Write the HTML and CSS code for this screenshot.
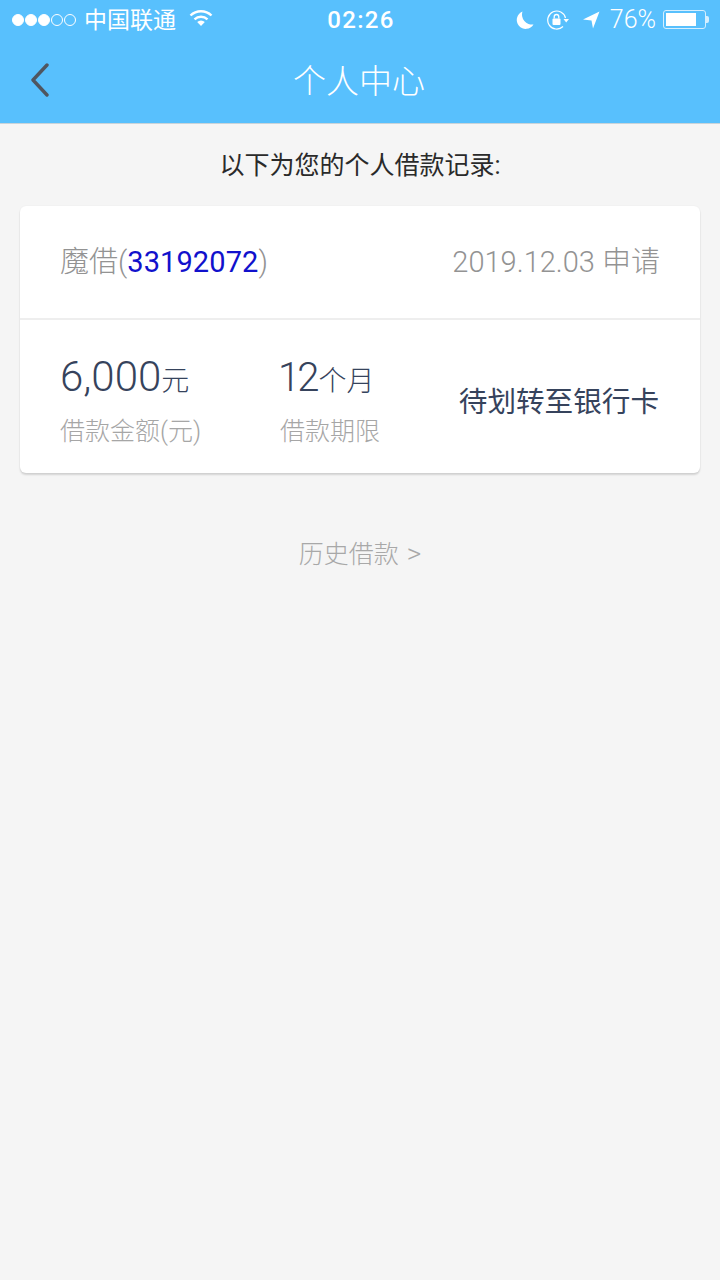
FILE: index.html
```html
<!DOCTYPE html>
<html lang="zh-CN">
<head>
    <meta charset="UTF-8">
    <meta name="viewport" content="width=device-width, initial-scale=1.0">
    <title>个人中心</title>
    <link rel="stylesheet" href="styles.css">
</head>
<body>
    <header class="top">
        <div class="status-bar">
            <div class="status-left">
                <span class="signal">
                    <i class="dot on"></i><i class="dot on"></i><i class="dot on"></i><i class="dot"></i><i class="dot"></i>
                </span>
                <span class="carrier">中国联通</span>
                <svg class="wifi" width="24" height="18" viewBox="0 0 24 18">
                    <path d="M1.5 6.5 A15 15 0 0 1 22.5 6.5" fill="none" stroke="#fff" stroke-width="2.4"/>
                    <path d="M5.5 10.3 A9.5 9.5 0 0 1 18.5 10.3" fill="none" stroke="#fff" stroke-width="2.4"/>
                    <path d="M8.2 13 L12 17 L15.8 13 A5.5 5.5 0 0 0 8.2 13 Z" fill="#fff"/>
                </svg>
            </div>
            <div class="status-time">02:26</div>
            <div class="status-right">
                <svg class="moon" width="20" height="20" viewBox="0 0 20 20">
                    <path d="M7.5 1.5 A9 9 0 1 0 18.5 14.5 A10 10 0 0 1 7.5 1.5 Z" fill="#fff"/>
                </svg>
                <svg class="lock" width="24" height="20" viewBox="0 0 24 20">
                    <path d="M19.5 8 A9 9 0 1 0 17 16.5" fill="none" stroke="#fff" stroke-width="1.2"/>
                    <path d="M17.5 9 L23 9 L20.2 12.5 Z" fill="#fff"/>
                    <rect x="6.5" y="8.5" width="8" height="6.5" rx="1" fill="#fff"/>
                    <path d="M8.2 8.5 V6.8 A2.3 2.3 0 0 1 12.8 6.8 V8.5" fill="none" stroke="#fff" stroke-width="1.3"/>
                </svg>
                <svg class="arrow" width="18" height="20" viewBox="0 0 18 20">
                    <path d="M1 9.5 L17.5 1.5 L11 18.5 L9.5 10.5 Z" fill="#fff"/>
                </svg>
                <span class="battery-text">76%</span>
                <span class="battery"><span class="battery-fill"></span></span>
            </div>
        </div>
        <div class="nav-bar">
            <svg class="back" width="20" height="34" viewBox="0 0 20 34">
                <path d="M17 2 L3 17 L17 32" fill="none" stroke="#4f5660" stroke-width="3.4" stroke-linecap="round" stroke-linejoin="round"/>
            </svg>
            <h1>个人中心</h1>
        </div>
    </header>

    <p class="intro">以下为您的个人借款记录:</p>

    <section class="card">
        <div class="card-head">
            <span class="loan-name">魔借(<span class="loan-no">33192072</span>)</span>
            <span class="loan-date">2019.12.03&nbsp;申请</span>
        </div>
        <div class="card-body">
            <div class="cell cell-amount">
                <div class="value"><span class="num">6,000</span><span class="unit">元</span></div>
                <div class="label">借款金额(元)</div>
            </div>
            <div class="cell cell-term">
                <div class="value"><span class="num">12</span><span class="unit">个月</span></div>
                <div class="label">借款期限</div>
            </div>
            <div class="loan-status">待划转至银行卡</div>
        </div>
    </section>

    <a href="#" class="history">历史借款 <span class="history-arrow">&gt;</span></a>
</body>
</html>
```

FILE: styles.css
```css
/* General Styles */
body {
    margin: 0;
    min-height: 1280px;
    background-color: #f5f5f5;
    font-family: Roboto, "Noto Sans CJK SC", sans-serif;
    font-weight: 300;
}

.top {
    background-color: #58c0fd;
    color: #ffffff;
    height: 124px;
    border-bottom: 1px solid #c9d4da;
    box-sizing: border-box;
}

/* Status bar */
.status-bar {
    height: 39px;
    display: flex;
    align-items: center;
    justify-content: space-between;
    padding: 0 11px 0 12px;
    position: relative;
}

.status-left, .status-right {
    display: flex;
    align-items: center;
}

.signal {
    display: flex;
    gap: 1px;
}

.dot {
    width: 12px;
    height: 12px;
    border: 1px solid #ffffff;
    border-radius: 50%;
    box-sizing: border-box;
}

.dot.on {
    background-color: #ffffff;
}

.carrier {
    font-family: "Noto Sans CJK SC", sans-serif;
    font-weight: 400;
    font-size: 23px;
    line-height: 30px;
    margin-left: 8px;
    margin-bottom: 4px;
}

.wifi {
    margin-left: 13px;
    margin-bottom: 3px;
}

.status-time {
    position: absolute;
    left: 2px;
    right: 0;
    text-align: center;
    font-size: 24px;
    font-weight: 500;
    letter-spacing: 1.3px;
}

.status-right {
    position: relative;
}

.moon {
    margin-right: 2px;
}

.lock {
    margin-left: 9px;
}

.arrow {
    margin-left: 12px;
}

.battery-text {
    font-size: 25px;
    font-weight: 300;
    margin-left: 10px;
}

.battery {
    width: 43px;
    height: 19px;
    margin-left: 7px;
    margin-right: 3px;
    border: 1px solid #d5efff;
    border-radius: 3px;
    box-sizing: border-box;
    padding: 2px;
    display: block;
    position: relative;
}

.battery::after {
    content: "";
    position: absolute;
    right: -4px;
    top: 5px;
    width: 3px;
    height: 7px;
    background-color: #d5efff;
    border-radius: 0 2px 2px 0;
}

.battery-fill {
    display: block;
    width: 82%;
    height: 100%;
    background-color: #ffffff;
}

/* Nav */
.nav-bar {
    height: 84px;
    display: flex;
    align-items: center;
    justify-content: center;
    position: relative;
}

.back {
    position: absolute;
    left: 30px;
    top: 24px;
}

h1 {
    margin: 0 2px 5px 0;
    font-family: "Noto Sans CJK SC", sans-serif;
    font-size: 33px;
    font-weight: 300;
}

.intro {
    margin: 26px 0 0;
    text-align: center;
    font-size: 25px;
    line-height: 32px;
    font-weight: 400;
    color: #2a2a2a;
}

/* Card */
.card {
    margin: 24px 20px 0;
    background: #ffffff;
    border-radius: 6px;
    box-shadow: 0 2px 2px rgba(0, 0, 0, 0.14), 0 0 2px rgba(0, 0, 0, 0.05);
    height: 267px;
}

.card-head {
    padding: 0 40px 7px;
    height: 105px;
    display: flex;
    align-items: center;
    justify-content: space-between;
    border-bottom: 2px solid #eeeeee;
    font-size: 29px;
    color: #939393;
}

.loan-no {
    color: #1111cc;
    font-weight: 400;
    letter-spacing: 0.1px;
}

.card-body {
    display: flex;
    padding: 0 40px;
    align-items: center;
    height: 153px;
}

.cell-amount {
    width: 219px;
}

.cell-term {
    width: 178px;
}

.value {
    color: #36435c;
    line-height: 50px;
    margin-top: 8px;
}

.num {
    font-size: 42px;
}

.cell-term .num {
    font-size: 40px;
    letter-spacing: -3px;
    margin-left: -1px;
    margin-right: 2px;
}

.unit {
    font-size: 28px;
}

.label {
    margin-top: 4px;
    font-size: 25px;
    line-height: 34px;
    color: #a6a6a6;
}

.cell-term .label {
    margin-left: 1px;
}

.loan-status {
    margin-left: auto;
    margin-right: 1px;
    font-size: 28.6px;
    font-weight: 400;
    color: #36435c;
    white-space: nowrap;
    margin-top: 6px;
}

.history {
    display: block;
    margin-top: 64px;
    text-align: center;
    font-size: 25px;
    line-height: 34px;
    color: #a8a8a8;
    text-decoration: none;
}

.history-arrow {
    font-size: 28px;
    margin-left: 2px;
}
```
